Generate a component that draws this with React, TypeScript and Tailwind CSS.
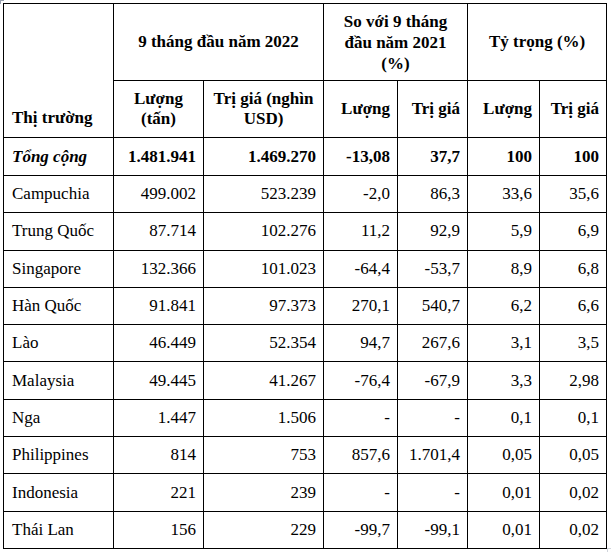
const rows: [string, string, string, string, string, string, string][] = [
  ["Campuchia", "499.002", "523.239", "-2,0", "86,3", "33,6", "35,6"],
  ["Trung Quốc", "87.714", "102.276", "11,2", "92,9", "5,9", "6,9"],
  ["Singapore", "132.366", "101.023", "-64,4", "-53,7", "8,9", "6,8"],
  ["Hàn Quốc", "91.841", "97.373", "270,1", "540,7", "6,2", "6,6"],
  ["Lào", "46.449", "52.354", "94,7", "267,6", "3,1", "3,5"],
  ["Malaysia", "49.445", "41.267", "-76,4", "-67,9", "3,3", "2,98"],
  ["Nga", "1.447", "1.506", "-", "-", "0,1", "0,1"],
  ["Philippines", "814", "753", "857,6", "1.701,4", "0,05", "0,05"],
  ["Indonesia", "221", "239", "-", "-", "0,01", "0,02"],
  ["Thái Lan", "156", "229", "-99,7", "-99,1", "0,01", "0,02"],
];

const cell = "border border-black px-[7px]";
const num = `${cell} text-right align-middle`;

export default function App() {
  return (
    <div className="relative w-[611px] h-[552px] bg-white text-black font-['Times_New_Roman','Liberation_Serif',Times,serif]">
      {/* word table handles */}
      <span className="absolute left-0 top-0 w-[4px] h-[4px] border-l border-t border-gray-400" />
      <span className="absolute left-[607px] top-[548px] w-[4px] h-[4px] border-l border-t border-gray-300" />

      <table className="absolute left-[3px] top-[3px] w-[603px] table-fixed border-collapse text-[17px] leading-[20px]">
        <colgroup>
          <col className="w-[110px]" />
          <col className="w-[90px]" />
          <col className="w-[120px]" />
          <col className="w-[74px]" />
          <col className="w-[70px]" />
          <col className="w-[72px]" />
          <col className="w-[67px]" />
        </colgroup>
        <thead className="font-bold">
          <tr className="h-[77px]">
            <th rowSpan={2} className={`${cell} pl-[8px] pb-[9px] text-left align-bottom`}>
              Thị trường
            </th>
            <th colSpan={2} className={`${cell} text-center align-middle`}>
              9 tháng đầu năm 2022
            </th>
            <th colSpan={2} className={`${cell} text-center align-middle leading-[21px]`}>
              So với 9 tháng
              <br />
              đầu năm 2021
              <br />
              (%)
            </th>
            <th colSpan={2} className={`${cell} text-center align-middle`}>
              Tỷ trọng (%)
            </th>
          </tr>
          <tr className="h-[57px]">
            <th className={`${cell} text-center align-middle`}>
              Lượng
              <br />
              (tấn)
            </th>
            <th className={`${cell} text-center align-middle`}>
              Trị giá (nghìn
              <br />
              USD)
            </th>
            <th className={num}>Lượng</th>
            <th className={num}>Trị giá</th>
            <th className={num}>Lượng</th>
            <th className={num}>Trị giá</th>
          </tr>
        </thead>
        <tbody>
          <tr className="h-[38px] font-bold">
            <td className={`${cell} pl-[8px] italic`}>Tổng cộng</td>
            <td className={num}>1.481.941</td>
            <td className={num}>1.469.270</td>
            <td className={num}>-13,08</td>
            <td className={num}>37,7</td>
            <td className={num}>100</td>
            <td className={num}>100</td>
          </tr>
          {rows.map((r) => (
            <tr key={r[0]} className="h-[37.3px]">
              <td className={`${cell} pl-[8px]`}>{r[0]}</td>
              {r.slice(1).map((v, i) => (
                <td key={i} className={num}>
                  {v}
                </td>
              ))}
            </tr>
          ))}
        </tbody>
      </table>
    </div>
  );
}
